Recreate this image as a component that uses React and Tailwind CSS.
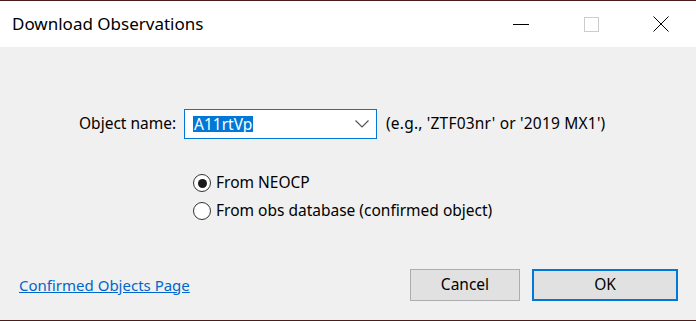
import { useState } from "react";

const Radio = ({ checked, label, onClick }) => (
  <div onClick={onClick} className="flex items-center h-[28px] cursor-default">
    <div className="w-[18px] h-[18px] rounded-full border border-[#333333] bg-white flex items-center justify-center">
      {checked && <div className="w-[9px] h-[9px] rounded-full bg-[#1a1a1a]" />}
    </div>
    <span className="ml-[5px]">{label}</span>
  </div>
);

const App = () => {
  const [source, setSource] = useState("neocp");

  return (
    <div
      className="w-[696px] h-[321px] flex flex-col bg-[#f0f0f0] border-t border-b border-[#4a1c1c] text-[#000000]"
      style={{ fontFamily: '"Noto Sans", "Open Sans", sans-serif' }}
    >
      <div className="h-[46px] bg-white flex items-center">
        <div className="pl-[12px] text-[17px] flex-1">Download Observations</div>
        <div className="flex h-full">
          <div className="w-[70px] h-full flex items-center justify-center">
            <div className="w-[16px] h-px bg-black" />
          </div>
          <div className="w-[70px] h-full flex items-center justify-center">
            <div className="w-[15px] h-[15px] border border-[#cccccc]" />
          </div>
          <div className="w-[70px] h-full flex items-center justify-center">
            <svg width="16" height="16" viewBox="0 0 16 16">
              <path d="M0.5 0.5 L15.5 15.5 M15.5 0.5 L0.5 15.5" stroke="#000" strokeWidth="1" fill="none" />
            </svg>
          </div>
        </div>
      </div>

      <div className="flex-1 flex flex-col text-[15.5px]">
        <div className="mt-[62px] flex items-center">
          <span className="ml-[79px] w-[105px]">Object name:</span>
          <div className="w-[193px] h-[30px] border border-[#0078d7] bg-white flex items-center">
            <span className="ml-[8px] px-px bg-[#0078d7] text-white leading-[16px]">A11rtVp</span>
            <svg className="ml-auto mr-[7px]" width="14" height="8" viewBox="0 0 14 8">
              <path d="M0.5 0.5 L7 7 L13.5 0.5" stroke="#555" strokeWidth="1.2" fill="none" />
            </svg>
          </div>
          <span className="ml-[9px] tracking-[0.2px]">(e.g., 'ZTF03nr' or '2019 MX1')</span>
        </div>

        <div className="mt-[30px] ml-[193px] flex flex-col">
          <Radio checked={source === "neocp"} label="From NEOCP" onClick={() => setSource("neocp")} />
          <Radio checked={source === "db"} label="From obs database (confirmed object)" onClick={() => setSource("db")} />
        </div>

        <div className="mt-[44px] flex items-center">
          <a href="#" className="ml-[19px] text-[15px] text-[#0066cc] underline">Confirmed Objects Page</a>
          <button className="ml-auto w-[110px] h-[32px] bg-[#e1e1e1] border border-[#adadad]">Cancel</button>
          <button className="ml-[12px] mr-[18px] w-[146px] h-[32px] bg-[#e1e1e1] border-2 border-[#0078d7]">OK</button>
        </div>
      </div>
    </div>
  );
};

export default App;
